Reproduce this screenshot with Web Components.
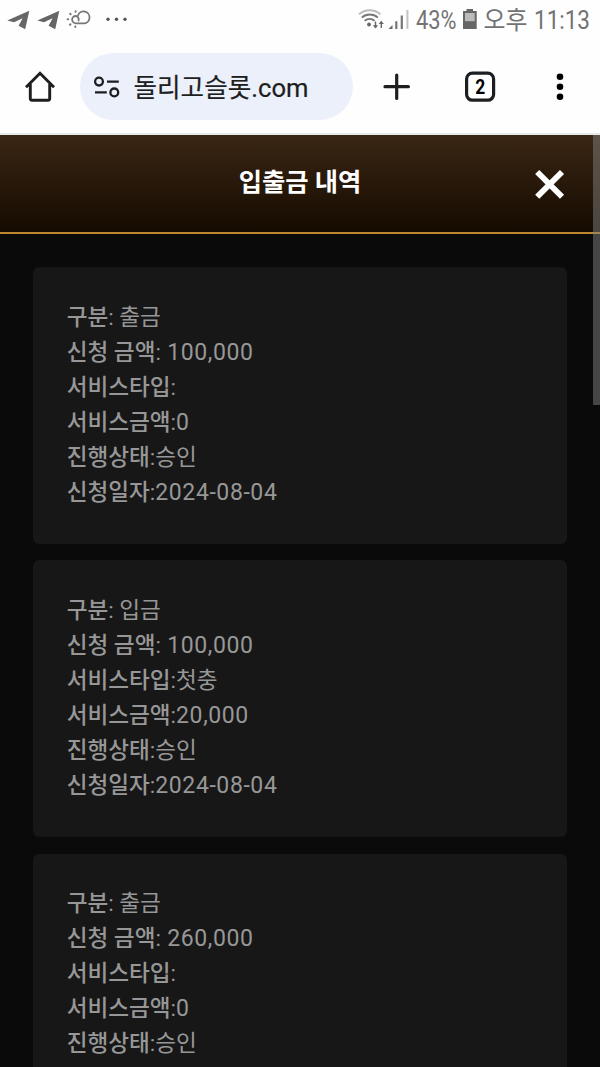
<!DOCTYPE html>
<html lang="ko">
<head>
<meta charset="utf-8">
<title>입출금 내역</title>
<style>
	body {
		margin: 0;
		height: 1067px;
		overflow: hidden;
		background: #0a0a0a;
		font-family: Roboto, "Noto Sans CJK KR", sans-serif;
	}
</style>
</head>
<body>
<history-screen></history-screen>
<script>
/**
 * Android status bar
 * @class
 */
class StatusBar extends HTMLElement {
	constructor() {
		super();

		/**
		 * @type {ShadowRoot}
		 */
		this.shadow = this.attachShadow({ mode: 'open' });
	}

	connectedCallback() {
		this.render();
	}

	/**
	 * Renders the component html/css.
	 */
	render() {
		this.shadow.innerHTML = `
    <style>
        :host {
          display: flex;
          justify-content: space-between;
          height: 40px;
          background: #fefefe;
          color: #737373;
        }
        svg { display: block; }
        text {
          font-family: Roboto, "Noto Sans CJK KR", sans-serif;
          font-size: 25px;
          fill: currentColor;
        }
    </style>
      <svg width="140" height="40" viewBox="0 0 140 40">
        <defs>
          <path id="plane" d="M7.3 20.4 29.3 10.8 25.2 29.2 18.6 25.8 22.6 18.2 14 22.2z" fill="#666" />
        </defs>
        <use href="#plane" />
        <use href="#plane" x="30" />
        <g fill="none" stroke="#777" stroke-width="1.8" stroke-linecap="round">
          <path d="M78.6 20.6c.6-2-.8-4.6-3-4.6-2 0-3.5 1.6-3.5 3.6s1.6 3.7 3.8 3.7h7.5a5.9 5.9 0 1 0-5.3-8" />
          <path d="M75.6 11.3v.4M70.2 13.8l.4.4M67.6 19.2h.6M70 24.7l.4-.4M75.3 27v-.5" stroke-width="2" />
        </g>
        <g fill="#555">
          <circle cx="108" cy="19.2" r="1.7" />
          <circle cx="116.5" cy="19.2" r="1.7" />
          <circle cx="125" cy="19.2" r="1.7" />
        </g>
      </svg>
      <svg width="250" height="40" viewBox="350 0 250 40">
        <g fill="none" stroke-width="1.9">
          <path d="M359 14.4a16 16 0 0 1 21.5 0" stroke="#bbb" />
          <path d="M361.8 17.6a12 12 0 0 1 16 0M364.6 20.8a7.8 7.8 0 0 1 10 0" stroke="#777" />
          <path d="M375.5 21.5v6M381.3 28v-6" stroke="#666" stroke-width="1.4" />
        </g>
        <path d="M372.9 25.3h5.2l-2.6 3.3zM378.7 24h5.2l-2.6-3.3z" fill="#666" />
        <circle cx="369" cy="24.5" r="1.9" fill="#666" />
        <path d="M388.5 28.9 392.5 25v3.9z" fill="#666" />
        <path d="M396.3 21.3v7.6M401.8 15.5v13.4" stroke="#777" stroke-width="2.2" />
        <path d="M407.4 10v18.9" stroke="#c2c2c2" stroke-width="2" />
        <text x="416" y="28.6" textLength="40.5" lengthAdjust="spacingAndGlyphs">43%</text>
        <path d="M466.5 9h6.5v2h3.7v18H463V11h3.5z" fill="#666" />
        <path d="M465 13h9.7v8.2H465z" fill="#bbb" />
        <text x="483.5" y="29.4" textLength="44" lengthAdjust="spacingAndGlyphs">오후</text>
        <text x="534" y="28.6" textLength="56" lengthAdjust="spacingAndGlyphs">11:13</text>
      </svg>
    `;
	}
}

/**
 * Browser toolbar, the address goes in the slot
 * @class
 */
class BrowserToolbar extends HTMLElement {
	constructor() {
		super();

		/**
		 * @type {ShadowRoot}
		 */
		this.shadow = this.attachShadow({ mode: 'open' });
	}

	connectedCallback() {
		/**
		 * @type {string}
		 */
		this.tabs = this.getAttribute('tabs') || '1';

		this.render();
	}

	/**
	 * Renders the component html/css.
	 */
	render() {
		this.shadow.innerHTML = `
    <style>
        :host {
          box-sizing: border-box;
          display: flex;
          align-items: center;
          height: 95px;
          border-bottom: 2px solid #e8e9e9;
          background: #fefefe;
          color: #1d1e20;
        }
        svg { display: block; flex: none; }
        .home { width: 80px; }
        .address {
          box-sizing: border-box;
          display: flex;
          align-items: center;
          gap: 12.5px;
          width: 273px;
          height: 67px;
          padding-left: 13px;
          border-radius: 34px;
          background: #ebf0fa;
          font-size: 25.6px;
          white-space: nowrap;
        }
        .address span {
          padding-top: 4px;
          line-height: 63px;
          -webkit-text-stroke: .2px currentColor;
        }
        text {
          font-family: Roboto, sans-serif;
          font-size: 20px;
          font-weight: 700;
        }
    </style>
      <svg class="home" width="80" height="40" viewBox="0 67 80 40">
        <path d="M26 87.3 40 73.2 54 87.3M30.3 84v14.6q0 1.7 1.7 1.7h16q1.7 0 1.7-1.7V84" fill="none" stroke="currentColor" stroke-width="2.9" />
      </svg>
      <div class="address">
        <svg width="28" height="28" viewBox="93 73 28 28">
          <g fill="none" stroke="currentColor" stroke-width="2.3">
            <circle cx="99" cy="81.6" r="3.9" />
            <path d="M107 81.6h11.8M95 92.4h11.8" />
            <circle cx="114.3" cy="92.4" r="3.9" />
          </g>
        </svg>
        <span><slot></slot></span>
      </div>
      <svg width="247" height="40" viewBox="353 67 247 40">
        <path d="M385 86.7h23.4M396.7 75v23.4" stroke="currentColor" stroke-width="3.2" stroke-linecap="round" />
        <rect x="466.6" y="73.2" width="27" height="27" rx="5.8" fill="none" stroke="currentColor" stroke-width="3.2" />
        <text x="475.2" y="94" textLength="10" lengthAdjust="spacingAndGlyphs">${this.tabs}</text>
        <circle cx="560" cy="76.8" r="3.3" />
        <circle cx="560" cy="86.8" r="3.3" />
        <circle cx="560" cy="96.8" r="3.3" />
      </svg>
    `;
	}
}

/**
 * Title bar of the page with a close button
 * @class
 */
class PageHeader extends HTMLElement {
	constructor() {
		super();

		/**
		 * @type {ShadowRoot}
		 */
		this.shadow = this.attachShadow({ mode: 'open' });
	}

	connectedCallback() {
		this.render();
	}

	/**
	 * Renders the component html/css.
	 */
	render() {
		this.shadow.innerHTML = `
    <style>
        :host {
          box-sizing: border-box;
          display: grid;
          grid-template-columns: 70px 1fr 70px;
          align-items: center;
          height: 99px;
          border-bottom: 2px solid #bd882f;
          background: linear-gradient(#3a2614, #150b00);
          color: #fff;
        }
        h1 {
          grid-column: 2;
          margin: 0 0 1px;
          font-size: 25.3px;
          font-weight: 700;
          line-height: 36px;
          text-align: center;
        }
        button {
          display: block;
          padding: 0;
          border: 0;
          background: none;
          color: inherit;
        }
        svg { display: block; }
    </style>
      <h1><slot></slot></h1>
      <button type="button" aria-label="닫기">
        <svg width="40" height="40" viewBox="0 0 40 40">
          <path d="M7.2 8 32 32.8M32 8 7.2 32.8" stroke="currentColor" stroke-width="5.8" />
        </svg>
      </button>
    `;
	}
}

/**
 * One labelled line of a card, the value goes in the slot
 * @class
 */
class HistoryRow extends HTMLElement {
	constructor() {
		super();

		/**
		 * @type {ShadowRoot}
		 */
		this.shadow = this.attachShadow({ mode: 'open' });
	}

	connectedCallback() {
		/**
		 * @type {string}
		 */
		this.label = this.getAttribute('label') || '';

		this.render();
	}

	/**
	 * Renders the component html/css.
	 */
	render() {
		this.shadow.innerHTML = `
    <style>
        :host {
          display: block;
          height: 35px;
          font-size: 22.6px;
          line-height: 36px;
        }
        b { font-weight: 500; }
        .value { white-space: pre; }
        :host([numeric]) .value {
          font-size: 23px;
          letter-spacing: .6px;
        }
    </style>
      <b>${this.label}</b>:<span class="value"><slot></slot></span>
    `;
	}
}

/**
 * Card with one deposit or withdrawal
 * @class
 */
class HistoryCard extends HTMLElement {
	constructor() {
		super();

		/**
		 * @type {ShadowRoot}
		 */
		this.shadow = this.attachShadow({ mode: 'open' });
	}

	connectedCallback() {
		this.render();
	}

	/**
	 * Renders the component html/css.
	 */
	render() {
		const get = (name) => this.getAttribute(name) || '';
		const date = get('date');

		this.shadow.innerHTML = `
    <style>
        :host {
          display: block;
          box-sizing: border-box;
          height: 276.67px;
          padding: 32.5px 33.33px;
          border-radius: 6px;
          background: #171717;
          color: #979797;
        }
    </style>
      <history-row label="구분"> ${get('kind')}</history-row>
      <history-row label="신청 금액" numeric> ${get('amount')}</history-row>
      <history-row label="서비스타입">${get('service')}</history-row>
      <history-row label="서비스금액" numeric>${get('bonus')}</history-row>
      <history-row label="진행상태">${get('state')}</history-row>
      ${date && `<history-row label="신청일자" numeric>${date}</history-row>`}
    `;
	}
}

/**
 * Whole screen
 * @class
 */
class HistoryScreen extends HTMLElement {
	constructor() {
		super();

		/**
		 * @type {ShadowRoot}
		 */
		this.shadow = this.attachShadow({ mode: 'open' });
	}

	connectedCallback() {
		this.render();
	}

	/**
	 * Renders the component html/css.
	 */
	render() {
		this.shadow.innerHTML = `
    <style>
        :host {
          display: flex;
          flex-direction: column;
          height: 1067px;
          overflow: hidden;
        }
        main {
          position: relative;
          flex: 1;
          min-height: 0;
          overflow: hidden;
          background: #0a0a0a;
        }
        .list {
          display: grid;
          gap: 16.67px;
          padding: 33px 33.33px;
        }
        .thumb {
          position: absolute;
          top: 0;
          right: 0;
          width: 6.67px;
          height: 270px;
          background: rgba(128, 128, 128, .5);
        }
    </style>
      <status-bar></status-bar>
      <browser-toolbar tabs="2">돌리고슬롯.com</browser-toolbar>
      <main>
        <page-header>입출금 내역</page-header>
        <div class="list">
          <history-card kind="출금" amount="100,000" bonus="0" state="승인" date="2024-08-04"></history-card>
          <history-card kind="입금" amount="100,000" service="첫충" bonus="20,000" state="승인" date="2024-08-04"></history-card>
          <history-card kind="출금" amount="260,000" bonus="0" state="승인"></history-card>
        </div>
        <div class="thumb"></div>
      </main>
    `;
	}
}

window.customElements.define('status-bar', StatusBar);
window.customElements.define('browser-toolbar', BrowserToolbar);
window.customElements.define('page-header', PageHeader);
window.customElements.define('history-row', HistoryRow);
window.customElements.define('history-card', HistoryCard);
window.customElements.define('history-screen', HistoryScreen);
</script>
</body>
</html>
